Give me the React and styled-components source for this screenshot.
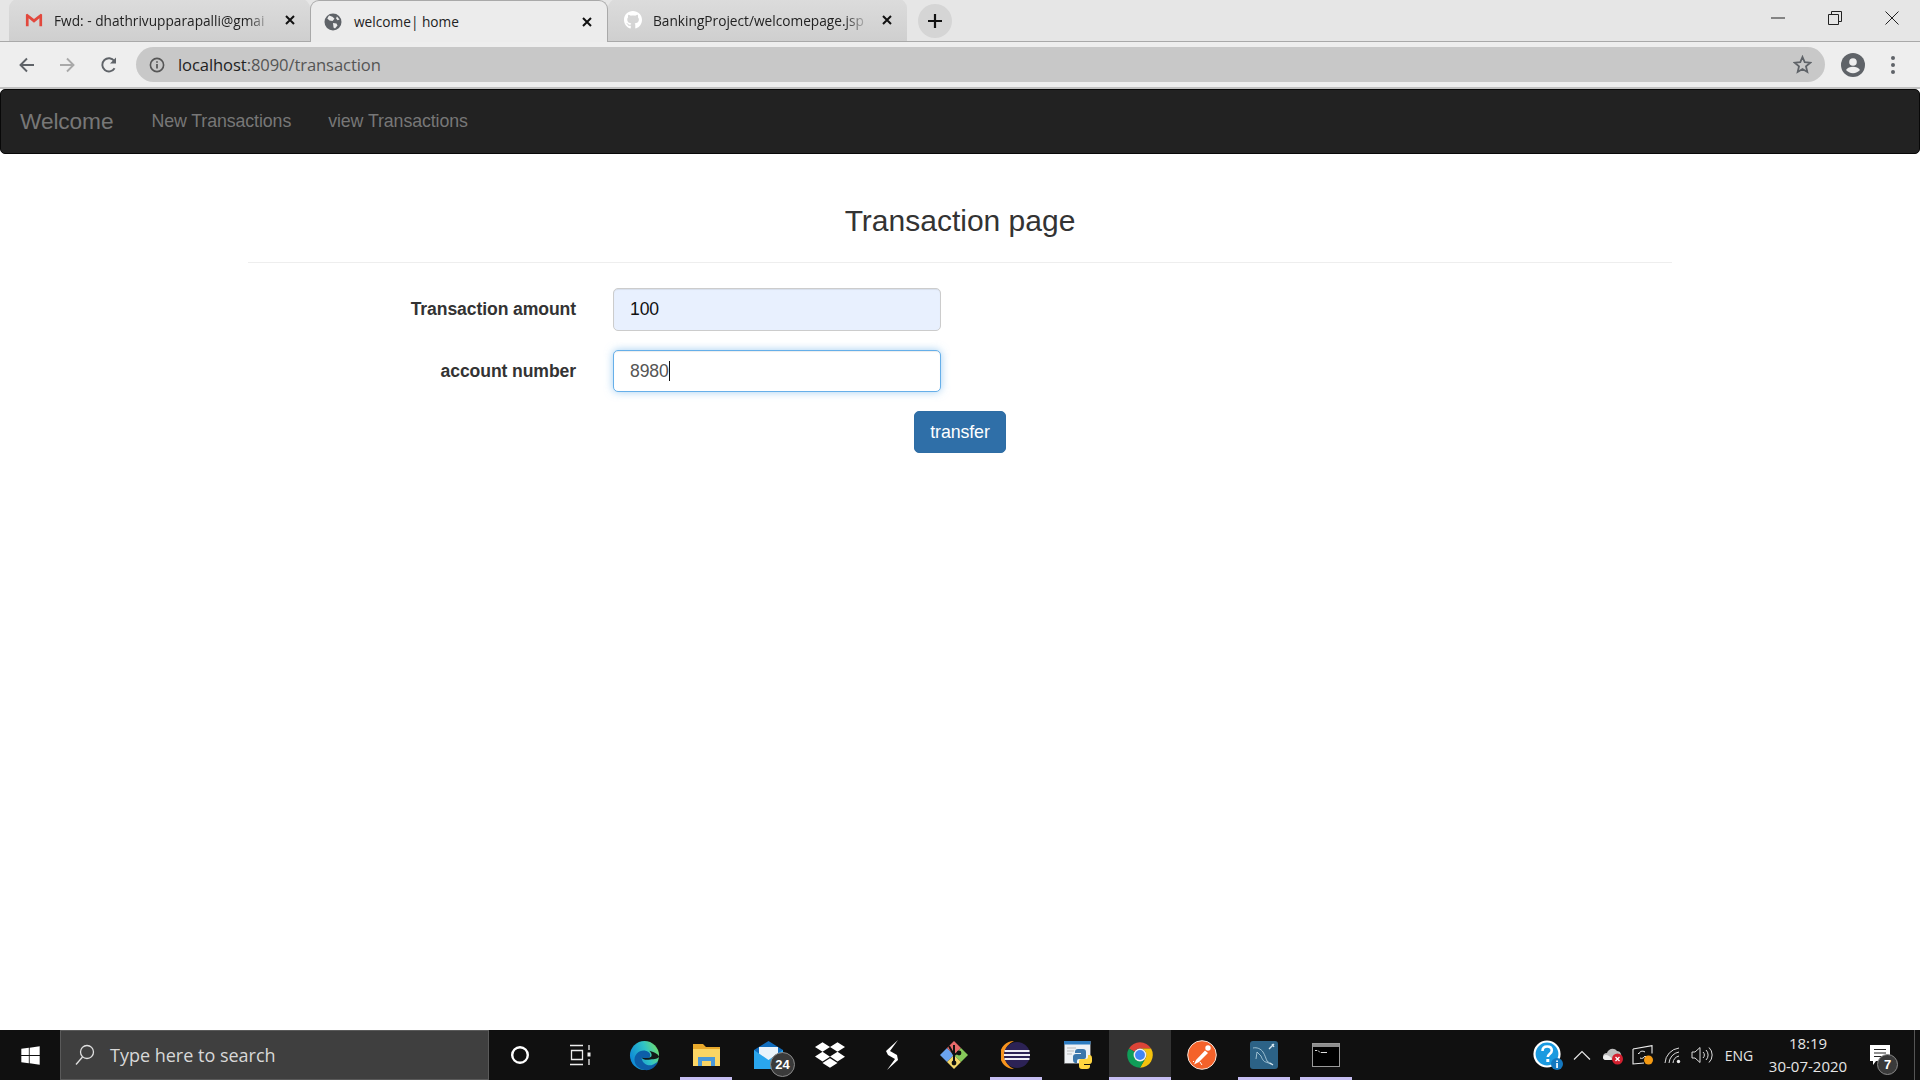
import React from "react";
import styled, { createGlobalStyle } from "styled-components";
import { FaGithub, FaDropbox, FaWindows } from "react-icons/fa";

const Global = createGlobalStyle`
  html, body { margin: 0; padding: 0; height: 100%; background: #fff; overflow: hidden; }
  * { box-sizing: border-box; }
`;

const Page = styled.div`
  width: 1920px;
  height: 1080px;
  display: flex;
  flex-direction: column;
  font-family: "Liberation Sans", Arial, sans-serif;
`;

/* ---------- browser chrome ---------- */
const TabStrip = styled.div`
  height: 42px;
  flex: none;
  display: flex;
  align-items: flex-end;
  padding-left: 9px;
  background: #e6e6e6;
  border-bottom: 1px solid #a9a9a9;
`;
const Tab = styled.div`
  width: ${(p) => p.$width}px;
  height: 42px;
  margin-bottom: ${(p) => (p.$active ? "-1px" : "0")};
  display: flex;
  align-items: center;
  gap: ${(p) => (p.$active ? 12 : 11)}px;
  padding: 0 14px 0 ${(p) => (p.$active ? 13 : 16)}px;
  border-radius: 9px 9px 0 0;
  background: ${(p) => (p.$active ? "#ececec" : "linear-gradient(#dcdcdc, #cfcfcf)")};
  border: ${(p) => (p.$active ? "1px solid #a9a9a9" : "none")};
  border-bottom: none;
  font-family: "Open Sans", "Noto Sans", sans-serif;
  font-size: 13.7px;
  color: #222;
`;
const TabIcon = styled.span`
  width: 18px;
  height: 18px;
  flex: none;
  display: flex;
  align-items: center;
  justify-content: center;
`;
const TabTitle = styled.span`
  flex: 1;
  min-width: 0;
  white-space: nowrap;
  ${(p) =>
    p.$fade &&
    "mask-image: linear-gradient(to right, #000 88%, transparent 100%);"}
`;
const NewTab = styled.div`
  width: 34px;
  height: 34px;
  margin: 0 0 3px 11px;
  border-radius: 50%;
  background: #d5d5d5;
  display: flex;
  align-items: center;
  justify-content: center;
`;
const WindowControls = styled.div`
  margin-left: auto;
  height: 41px;
  display: flex;
  align-items: flex-start;
  padding-top: 8px;
`;
const WindowButton = styled.div`
  width: 57px;
  height: 20px;
  display: flex;
  align-items: center;
  justify-content: center;
`;
const Toolbar = styled.div`
  height: 47px;
  flex: none;
  display: flex;
  align-items: flex-start;
  padding-top: 5px;
  background: #eeeeee;
  border-bottom: 2px solid #c0c0c0;
`;
const NavButton = styled.div`
  width: 40px;
  height: 35px;
  flex: none;
  margin-left: ${(p) => p.$ml || 0}px;
  display: flex;
  align-items: center;
  justify-content: center;
`;
const Omnibox = styled.div`
  width: 1689px;
  height: 35px;
  margin-left: 7px;
  padding: 0 13px 0 13px;
  display: flex;
  align-items: center;
  gap: 13px;
  border-radius: 18px;
  background: #c8c8c8;
  font-family: "Open Sans", "Noto Sans", sans-serif;
  font-size: 16.6px;
  letter-spacing: -0.1px;
  color: #555;
`;
const UrlHost = styled.span`
  color: #222;
`;
const OmniEnd = styled.span`
  margin-left: auto;
  display: flex;
`;

/* ---------- site navbar ---------- */
const Navbar = styled.nav`
  height: 65px;
  flex: none;
  display: flex;
  align-items: center;
  padding: 0 0 1px 19px;
  background: #222;
  border: 1px solid #080808;
  border-radius: 5px;
`;
const Brand = styled.span`
  font-size: 22.7px;
  letter-spacing: -0.1px;
  color: #777;
  margin-right: 38px;
`;
const NavLink = styled.span`
  font-size: 17.8px;
  letter-spacing: -0.1px;
  color: #777;
  margin-right: 37px;
`;

/* ---------- main ---------- */
const Main = styled.main`
  flex: 1;
  min-height: 0;
  width: 1424px;
  margin: 0 auto;
`;
const Heading = styled.h1`
  margin: 48px 0 0;
  height: 37px;
  line-height: 37px;
  text-align: center;
  font-size: 30px;
  font-weight: 400;
  color: #333;
`;
const Rule = styled.hr`
  margin: 23px 0 25px;
  border: none;
  border-top: 1px solid #eee;
`;
const Form = styled.div`
  display: grid;
  grid-template-columns: 328px 328px;
  column-gap: 37px;
  row-gap: 19px;
  align-items: center;
`;
const Label = styled.label`
  text-align: right;
  font-size: 17.6px;
  font-weight: 700;
  letter-spacing: -0.1px;
  color: #333;
`;
const Field = styled.div`
  height: ${(p) => (p.$focus ? 42 : 43)}px;
  display: flex;
  align-items: center;
  padding: 0 16px;
  border-radius: 5px;
  font-size: 17.6px;
  letter-spacing: -0.1px;
  color: ${(p) => (p.$focus ? "#555" : "#111")};
  background: ${(p) => (p.$focus ? "#fff" : "#e8f0fe")};
  border: 1px solid ${(p) => (p.$focus ? "#66afe9" : "#ccc")};
  box-shadow: ${(p) =>
    p.$focus
      ? "inset 0 1px 1px rgba(0,0,0,.075), 0 0 8px rgba(102,175,233,.6)"
      : "inset 0 1px 1px rgba(0,0,0,.075)"};
`;
const Caret = styled.span`
  width: 1px;
  height: 20px;
  background: #111;
`;
const ButtonRow = styled.div`
  padding: 19px 0 0 666px;
`;
const Button = styled.button`
  width: 92px;
  height: 42px;
  padding: 0;
  border-radius: 5px;
  border: 1px solid #2e6da4;
  background: #2f6fa8;
  color: #fff;
  font-family: inherit;
  font-size: 17.8px;
  letter-spacing: -0.1px;
`;

/* ---------- taskbar ---------- */
const Taskbar = styled.footer`
  height: 50px;
  flex: none;
  display: flex;
  background: #101010;
  color: #e6e6e6;
  font-family: "Open Sans", "Noto Sans", sans-serif;
`;
const Start = styled.div`
  width: 60px;
  display: flex;
  align-items: center;
  justify-content: center;
`;
const Search = styled.div`
  width: 429px;
  display: flex;
  align-items: center;
  gap: 15px;
  padding-left: 14px;
  background: #3f3f3f;
  border: 1px solid #5a5a5a;
  font-size: 18px;
  color: #d8d8d8;
`;
const TaskCell = styled.div`
  position: relative;
  width: 62px;
  flex: none;
  display: flex;
  align-items: center;
  justify-content: center;
  background: ${(p) => (p.$active ? "#333" : "transparent")};
  &::after {
    content: "";
    display: ${(p) => (p.$open ? "block" : "none")};
    position: absolute;
    bottom: 0;
    left: ${(p) => (p.$active ? 0 : 5)}px;
    right: ${(p) => (p.$active ? 0 : 5)}px;
    height: 3px;
    background: #c5bdf2;
  }
`;
const CountBadge = styled.span`
  position: absolute;
  width: ${(p) => p.$size}px;
  height: ${(p) => p.$size}px;
  right: ${(p) => p.$right}px;
  bottom: ${(p) => p.$bottom}px;
  display: flex;
  align-items: center;
  justify-content: center;
  border-radius: 50%;
  background: #3a3a3a;
  border: 1px solid #8a8a8a;
  color: #fff;
  font-family: "Liberation Sans", sans-serif;
  font-size: 13px;
  font-weight: 700;
`;
const Tray = styled.div`
  margin-left: auto;
  display: flex;
`;
const TrayCell = styled.div`
  position: relative;
  width: ${(p) => p.$w}px;
  display: flex;
  flex-direction: column;
  align-items: center;
  justify-content: center;
  font-size: ${(p) => p.$fs || 14}px;
  line-height: 23px;
`;
const ShowDesktop = styled.div`
  width: 15px;
  padding-left: 9px;
`;
const ShowDesktopLine = styled.div`
  width: 1px;
  height: 100%;
  background: #555;
`;

/* ---------- drawings ---------- */
const Gmail = () => (
  <svg width="20" height="16" viewBox="0 0 20 16">
    <path d="M1 2v13h3V6l6 5 6-5v9h3V2l-1.5-1L10 7 2.5 1z" fill="#e2483d" />
  </svg>
);
const Globe = () => (
  <svg width="18" height="18" viewBox="0 0 18 18">
    <circle cx="9" cy="9" r="8.5" fill="#5f6368" />
    <path d="M5 2.5l3.5 1.2 2 2-2 2.3-3-.5-2.2-2zM9 10l3.5.5 1 2-2.5 3-1.500-1zM13 3.500l2.500 3-2 .7-1.500-2z" fill="#ececec" />
  </svg>
);
const CloseX = () => (
  <svg width="12" height="12" viewBox="0 0 12 12">
    <path d="M2 2l8 8M10 2l-8 8" stroke="#111" strokeWidth="2" fill="none" />
  </svg>
);
const Back = ({ c = "#5f6368", flip }) => (
  <svg width="18" height="18" viewBox="0 0 18 18" style={flip ? { transform: "scaleX(-1)" } : undefined}>
    <path d="M16 9H3M9 2.5L2.5 9 9 15.5" stroke={c} strokeWidth="1.9" fill="none" />
  </svg>
);
const Reload = () => (
  <svg width="18" height="18" viewBox="0 0 18 18">
    <path d="M14.6 12.2A6.6 6.6 0 1 1 14.3 5" stroke="#5f6368" strokeWidth="1.9" fill="none" />
    <path d="M16 1.5v6h-6z" fill="#5f6368" />
  </svg>
);
const Info = () => (
  <svg width="16" height="16" viewBox="0 0 16 16">
    <circle cx="8" cy="8" r="6.6" stroke="#555" strokeWidth="1.6" fill="none" />
    <path d="M8 7v4.6M8 4.2v1.6" stroke="#555" strokeWidth="1.7" />
  </svg>
);
const Star = () => (
  <svg width="19" height="19" viewBox="0 0 19 19">
    <path d="M9.5 2l2.2 5.2 5.6.5-4.3 3.7 1.3 5.5-4.8-2.9-4.8 2.9 1.3-5.5L1.7 7.700l5.6-.5z" stroke="#5f6368" strokeWidth="1.8" fill="none" />
  </svg>
);
const Avatar = () => (
  <svg width="24" height="24" viewBox="0 0 24 24">
    <circle cx="12" cy="12" r="12" fill="#5f6368" />
    <circle cx="12" cy="9" r="3.8" fill="#eee" />
    <path d="M5 17c1.500-2.400 4-3.200 7-3.200s5.500.8 7 3.200c-1.700 2-4.200 3.200-7 3.200s-5.300-1.200-7-3.200z" fill="#eee" />
  </svg>
);
const Dots = () => (
  <svg width="6" height="20" viewBox="0 0 6 20">
    <circle cx="3" cy="3" r="2" fill="#5f6368" />
    <circle cx="3" cy="10" r="2" fill="#5f6368" />
    <circle cx="3" cy="17" r="2" fill="#5f6368" />
  </svg>
);
const Plus = () => (
  <svg width="16" height="16" viewBox="0 0 16 16">
    <path d="M8 1v14M1 8h14" stroke="#111" strokeWidth="2.2" />
  </svg>
);
const Minimize = () => (
  <svg width="14" height="2" viewBox="0 0 14 2"><path d="M0 1h14" stroke="#222" strokeWidth="1" /></svg>
);
const Restore = () => (
  <svg width="14" height="14" viewBox="0 0 14 14">
    <path d="M.5 3.500h10v10H.5zM3.500 3.500V.5h10v10h-3" stroke="#222" fill="none" />
  </svg>
);
const WinClose = () => (
  <svg width="14" height="14" viewBox="0 0 14 14">
    <path d="M.5.5l13 13M13.500.5l-13 13" stroke="#222" fill="none" />
  </svg>
);
const SearchGlass = () => (
  <svg width="20" height="22" viewBox="0 0 20 22">
    <circle cx="12" cy="8" r="6.500" stroke="#e0e0e0" strokeWidth="1.300" fill="none" />
    <path d="M7.500 13L1 20.500" stroke="#e0e0e0" strokeWidth="1.300" />
  </svg>
);
const Cortana = () => (
  <svg width="20" height="20" viewBox="0 0 20 20">
    <circle cx="10" cy="10" r="7.800" stroke="#fff" strokeWidth="2.400" fill="none" />
  </svg>
);
const TaskView = () => (
  <svg width="26" height="22" viewBox="0 0 26 22">
    <path d="M1 1.500h13M1 20.500h13M2.500 6.500h11v9h-11z" stroke="#eee" strokeWidth="1.300" fill="none" />
    <path d="M20 1v5M20 15v6" stroke="#eee" strokeWidth="1.300" />
    <rect x="18.500" y="8.500" width="3" height="4" fill="#eee" />
  </svg>
);
const Edge = () => (
  <svg width="31" height="31" viewBox="0 0 32 32">
    <defs>
      <linearGradient id="edgeA" x1="0" y1="0.700" x2="1" y2="0.300">
        <stop offset="0" stopColor="#0b84d8" />
        <stop offset="0.600" stopColor="#2fc3c7" />
        <stop offset="1" stopColor="#6fdc6e" />
      </linearGradient>
    </defs>
    <circle cx="16" cy="16" r="15" fill="url(#edgeA)" />
    <path d="M6 23c-2-8 5-13 11-12 5 1 6 5 4 7-2 1-5 1-8 0 0 5 5 9 10 8 3-1 5-2 7-4-2 6-8 10-14 9-5-1-9-4-10-8z" fill="#0d5ea8" />
    <path d="M13 18c3 1 8 1 10-1 1-2 0-4-2-6 4 1 9 3 10 6 0 2-5 3-9 3-4 1-8 0-9-2z" fill="#101010" opacity="0.950" />
  </svg>
);
const Folder = () => (
  <svg width="29" height="24" viewBox="0 0 29 24">
    <path d="M1 1h10l3 3h14v19H1z" fill="#e9a92b" />
    <path d="M1 6h27v17H1z" fill="#fbd564" />
    <path d="M6 14h17v9h-4v-5h-9v5H6z" fill="#4a98d8" />
  </svg>
);
const Mail = () => (
  <svg width="31" height="29" viewBox="0 0 31 29">
    <path d="M15.500 0L30 9v19H1V9z" fill="#0f6cbd" />
    <path d="M6 6h19v10L15.500 21 6 16z" fill="#e9f3fb" />
    <path d="M1 9l14.500 10L30 9v19H1z" fill="#2aa6ee" />
  </svg>
);
const Stripe = () => (
  <svg width="14" height="30" viewBox="0 0 14 30">
    <path d="M13 0L1 11l2 4 7 4-8 11 11-10-1-5-7-4z" fill="#fff" />
  </svg>
);
const Kraken = () => (
  <svg width="30" height="30" viewBox="0 0 30 30">
    <path d="M15 15L8 8l-7 7 7 7z" fill="#6aa3ef" />
    <path d="M15 15L8 8l7-7 7 7z" fill="#e86a6a" />
    <path d="M15 15l7-7 7 7-7 7z" fill="#86c95a" />
    <path d="M15 15l7 7-7 7-7-7z" fill="#f2d66a" />
    <path d="M15 5v19M10 6l5 9 5-3" stroke="#111" strokeWidth="2" fill="none" />
    <circle cx="15" cy="23" r="2.400" fill="#111" />
    <circle cx="20" cy="13" r="2.400" fill="#111" />
  </svg>
);
const Eclipse = () => (
  <svg width="30" height="30" viewBox="0 0 30 30">
    <path d="M13 1A14 14 0 0 0 13 29 15 15 0 0 1 13 1z" fill="#f7941e" />
    <circle cx="16" cy="15" r="13" fill="#2c2255" />
    <path d="M3.500 11h25M3 15h26M3.500 19h25" stroke="#f0eff6" strokeWidth="2.200" />
  </svg>
);
const PY = "M11 11a3 3 0 0 1 3-3h5a3 3 0 0 1 3 3v5a2 2 0 0 1-2 2h-5a2 2 0 0 0-2 2v2h-2a3 3 0 0 1-2-3v-3a3 3 0 0 1 3-3h5v-1h-6z";
const PythonDoc = () => (
  <svg width="29" height="28" viewBox="0 0 29 28">
    <rect x="0.300" y="0.300" width="26" height="22" fill="#eef2f6" stroke="#777" strokeWidth="0.600" />
    <rect x="0" y="0" width="26.500" height="3.500" fill="#2d7cc1" />
    <path d="M3 7h9M3 10h7M3 13h5" stroke="#bbb" strokeWidth="1" />
    <path d={PY} fill="#ffd53f" transform="rotate(180 18.500 18)" />
    <path d={PY} fill="#3b77ac" />
  </svg>
);
const Chrome = () => (
  <svg width="28" height="28" viewBox="0 0 48 48">
    <path d="M5 13A22 22 0 0 1 43 13L24 13A11 11 0 0 0 14.500 18.500Z" fill="#db4437" />
    <path d="M43 13A22 22 0 0 1 24 46L33.500 29.500A11 11 0 0 0 24 13Z" fill="#f4c20d" />
    <path d="M24 46A22 22 0 0 1 5 13L14.500 18.500A11 11 0 0 0 33.500 29.500Z" fill="#0f9d58" />
    <circle cx="24" cy="24" r="11" fill="#f1f1f1" />
    <circle cx="24" cy="24" r="8.500" fill="#4285f4" />
  </svg>
);
const Postman = () => (
  <svg width="30" height="30" viewBox="0 0 30 30">
    <circle cx="15" cy="15" r="14.300" fill="#f4622a" stroke="#f3e4da" strokeWidth="1" />
    <circle cx="21" cy="8" r="2.700" fill="#fff" />
    <path d="M18 10.500l3 2.500-9 9-5 2.500 2-4.500z" fill="#fff" />
    <path d="M13 22l2 3M7 21l-1 1" stroke="#fff" strokeWidth="1" />
  </svg>
);
const Mysql = () => (
  <svg width="28" height="28" viewBox="0 0 28 28">
    <rect width="28" height="28" rx="3" fill="#2c6286" />
    <path d="M3 7c4-1 8 1 10 4s3 7 4 9l4 3-5-2c-2 0-4-3-5-6L7 11l-1 7" stroke="#b9d5e3" strokeWidth="0.800" fill="none" />
    <path d="M19 8l5-5M22 3l2 3M20 22l3 2" stroke="#d8e8f0" strokeWidth="1.300" fill="none" />
  </svg>
);
const Cmd = () => (
  <svg width="28" height="24" viewBox="0 0 28 24">
    <rect x="0.500" y="0.500" width="27" height="23" fill="#000" stroke="#9a9a9a" />
    <rect x="1" y="1" width="26" height="3" fill="#8d8d8d" />
    <path d="M3 7.500h2M6 7.500l2 2M9 9.500h6" stroke="#ddd" strokeWidth="1" />
  </svg>
);
const Help = () => (
  <svg width="30" height="30" viewBox="0 0 30 30">
    <circle cx="14" cy="14" r="12.500" fill="#1b9ae0" stroke="#fff" strokeWidth="2.200" />
    <path d="M9.500 11c0-3 2-4.500 4.700-4.500s4.600 1.500 4.600 4c0 3.500-4 3.500-4 6.500" stroke="#fff" strokeWidth="2.600" fill="none" />
    <rect x="13.300" y="19" width="3" height="3" fill="#fff" />
    <circle cx="24" cy="24" r="6" fill="#1478c0" />
    <rect x="23.200" y="23" width="1.700" height="5" fill="#fff" />
    <rect x="23.200" y="20.500" width="1.700" height="1.500" fill="#fff" />
  </svg>
);
const Chevron = () => (
  <svg width="18" height="10" viewBox="0 0 18 10">
    <path d="M1 9.500l8-8 8 8" stroke="#e6e6e6" strokeWidth="1.200" fill="none" />
  </svg>
);
const CloudErr = () => (
  <svg width="22" height="20" viewBox="0 0 22 20">
    <path d="M1 12a4 4 0 0 1 4-4c1-4 7-6 10-2 3 0 5 3 4 6v3H4a3 3 0 0 1-3-3z" fill="#bdbdbd" />
    <path d="M1 13a3 3 0 0 1 3-3c2 0 4 1 6 4l-1 1H4a3 3 0 0 1-3-2z" fill="#eee" />
    <circle cx="15.500" cy="14" r="5.500" fill="#d3202f" />
    <path d="M13.500 12l4 4M17.500 12l-4 4" stroke="#fff" strokeWidth="1.300" />
  </svg>
);
const Sync = () => (
  <svg width="22" height="20" viewBox="0 0 22 20">
    <path d="M1 4L20 .6v8M1 4v15l11-1" stroke="#eee" strokeWidth="1.100" fill="none" />
    <path d="M13 7c-3-2-6 0-6 2l-1-1M8 13c2 1 4 0 5-2l1 1" stroke="#eee" strokeWidth="1" fill="none" />
    <circle cx="16.500" cy="15" r="4.500" fill="#f59a12" />
  </svg>
);
const Wifi = () => (
  <svg width="18" height="18" viewBox="0 0 18 18">
    <path d="M1 17A16 16 0 0 1 15 2M5 17A12 12 0 0 1 15 6M9 17A8 8 0 0 1 15 10" stroke="#ddd" strokeWidth="1" fill="none" />
    <circle cx="14.500" cy="15.500" r="1.700" fill="#eee" />
  </svg>
);
const Volume = () => (
  <svg width="22" height="18" viewBox="0 0 22 18">
    <path d="M1 6h3l5-4.500v15L4 12H1z" stroke="#ddd" strokeWidth="1" fill="none" />
    <path d="M12 6a4 4 0 0 1 0 6M15 4a7 7 0 0 1 0 10M18 1.500a10.500 10.500 0 0 1 0 15" stroke="#ddd" strokeWidth="1" fill="none" />
  </svg>
);
const Notes = () => (
  <svg width="20" height="20" viewBox="0 0 20 20">
    <path d="M0 0h20v16H6l-3 4v-4H0z" fill="#fff" />
    <path d="M4 4.500h12M4 8h12M4 11.500h9" stroke="#222" strokeWidth="1" />
  </svg>
);

const apps = [
  { icon: <Cortana /> },
  { icon: <TaskView /> },
  { icon: <Edge /> },
  { icon: <Folder />, open: true },
  { icon: <Mail />, badge: "24" },
  { icon: <FaDropbox size={30} color="#fff" /> },
  { icon: <Stripe /> },
  { icon: <Kraken /> },
  { icon: <Eclipse />, open: true },
  { icon: <PythonDoc /> },
  { icon: <Chrome />, open: true, active: true },
  { icon: <Postman /> },
  { icon: <Mysql />, open: true },
  { icon: <Cmd />, open: true },
];

export default function App() {
  return (
    <Page>
      <Global />
      <TabStrip>
        <Tab $width={301}>
          <TabIcon><Gmail /></TabIcon>
          <TabTitle $fade>Fwd: - dhathrivupparapalli@gmai</TabTitle>
          <CloseX />
        </Tab>
        <Tab $width={298} $active>
          <TabIcon><Globe /></TabIcon>
          <TabTitle>welcome| home</TabTitle>
          <CloseX />
        </Tab>
        <Tab $width={299}>
          <TabIcon><FaGithub size={20} color="#fff" /></TabIcon>
          <TabTitle $fade>BankingProject/welcomepage.jsp</TabTitle>
          <CloseX />
        </Tab>
        <NewTab><Plus /></NewTab>
        <WindowControls>
          <WindowButton><Minimize /></WindowButton>
          <WindowButton><Restore /></WindowButton>
          <WindowButton><WinClose /></WindowButton>
        </WindowControls>
      </TabStrip>
      <Toolbar>
        <NavButton $ml={7}><Back /></NavButton>
        <NavButton><Back c="#a9a9a9" flip /></NavButton>
        <NavButton $ml={2}><Reload /></NavButton>
        <Omnibox>
          <Info />
          <span><UrlHost>localhost</UrlHost>:8090/transaction</span>
          <OmniEnd><Star /></OmniEnd>
        </Omnibox>
        <NavButton $ml={8}><Avatar /></NavButton>
        <NavButton><Dots /></NavButton>
      </Toolbar>
      <Navbar>
        <Brand>Welcome</Brand>
        <NavLink>New Transactions</NavLink>
        <NavLink>view Transactions</NavLink>
      </Navbar>
      <Main>
        <Heading>Transaction page</Heading>
        <Rule />
        <Form>
          <Label>Transaction amount</Label>
          <Field>100</Field>
          <Label>account number</Label>
          <Field $focus>8980<Caret /></Field>
        </Form>
        <ButtonRow><Button>transfer</Button></ButtonRow>
      </Main>
      <Taskbar>
        <Start><FaWindows size={21} color="#fff" /></Start>
        <Search>
          <SearchGlass />
          <span>Type here to search</span>
        </Search>
        {apps.map((a, i) => (
          <TaskCell key={i} $open={a.open} $active={a.active}>
            {a.icon}
            {a.badge && <CountBadge $size={25} $right={4} $bottom={3}>{a.badge}</CountBadge>}
          </TaskCell>
        ))}
        <Tray>
          <TrayCell $w={35}><Help /></TrayCell>
          <TrayCell $w={33}><Chevron /></TrayCell>
          <TrayCell $w={29}><CloudErr /></TrayCell>
          <TrayCell $w={32}><Sync /></TrayCell>
          <TrayCell $w={28}><Wifi /></TrayCell>
          <TrayCell $w={30}><Volume /></TrayCell>
          <TrayCell $w={44} $fs={14}>ENG</TrayCell>
          <TrayCell $w={94} $fs={15}><span>18:19</span><span>30-07-2020</span></TrayCell>
          <TrayCell $w={50}>
            <Notes />
            <CountBadge $size={21} $right={7} $bottom={5}>7</CountBadge>
          </TrayCell>
          <ShowDesktop><ShowDesktopLine /></ShowDesktop>
        </Tray>
      </Taskbar>
    </Page>
  );
}
